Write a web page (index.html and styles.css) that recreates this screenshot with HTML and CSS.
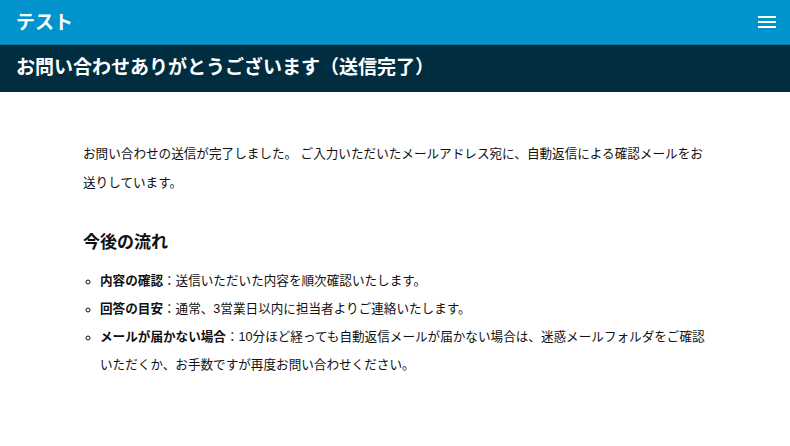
FILE: index.html
```html
<!DOCTYPE html>
<html lang="ja">
<head>
<meta charset="utf-8">
<title>お問い合わせありがとうございます（送信完了）</title>
<link rel="stylesheet" href="styles.css">
</head>
<body>
<header class="site-header">
  <div class="site-title">テスト</div>
  <button class="menu-btn" aria-label="メニュー">
    <span class="bar"></span><span class="bar"></span><span class="bar"></span>
  </button>
</header>
<div class="page-title-bar">
  <h1 class="page-title">お問い合わせありがとうございます（送信完了）</h1>
</div>
<main class="content">
  <p class="lead">お問い合わせの送信が完了しました。 ご入力いただいたメールアドレス宛に、自動返信による確認メールをお送りしています。</p>
  <h2 class="section-title">今後の流れ</h2>
  <ul class="flow-list">
    <li><strong>内容の確認</strong>：送信いただいた内容を順次確認いたします。</li>
    <li><strong>回答の目安</strong>：通常、3営業日以内に担当者よりご連絡いたします。</li>
    <li><strong>メールが届かない場合</strong>：10分ほど経っても自動返信メールが届かない場合は、迷惑メールフォルダをご確認いただくか、お手数ですが再度お問い合わせください。</li>
  </ul>
</main>
</body>
</html>
```

FILE: styles.css
```css
* { box-sizing: border-box; }
html, body { margin: 0; padding: 0; }
body {
  font-family: "Liberation Sans", "Noto Sans CJK JP", sans-serif;
  font-size: 12.6px;
  color: #111;
  background: #fff;
}
.site-header {
  height: 45px;
  background: #0093cc;
  display: flex;
  align-items: center;
  justify-content: space-between;
  padding: 0 14px 0 16px;
  border-bottom: 1px solid #0b7aa6;
}
.site-title {
  color: #fff;
  font-size: 19px;
  font-weight: bold;
  line-height: 1;
}
.menu-btn {
  background: none;
  border: 0;
  padding: 0;
  width: 18px;
  display: flex;
  flex-direction: column;
  gap: 3px;
  cursor: pointer;
}
.menu-btn .bar {
  display: block;
  height: 2px;
  width: 18px;
  background: #fff;
}
.page-title-bar {
  background: #002e40;
  height: 47px;
  display: flex;
  align-items: center;
  padding: 0 16px;
}
.page-title {
  margin: 0;
  color: #fff;
  font-size: 19px;
  font-weight: bold;
  line-height: 1.2;
}
.content {
  width: 624px;
  margin: 0 auto;
  padding-top: 48px;
}
.lead {
  margin: 0;
  line-height: 29px;
}
.section-title {
  margin: 32px 0 0;
  font-size: 17px;
  line-height: 26px;
  font-weight: bold;
}
.flow-list {
  margin: 11px 0 0;
  padding-left: 17px;
  list-style: circle;
}
.flow-list li {
  line-height: 28px;
}
.flow-list strong { font-weight: bold; }
```
